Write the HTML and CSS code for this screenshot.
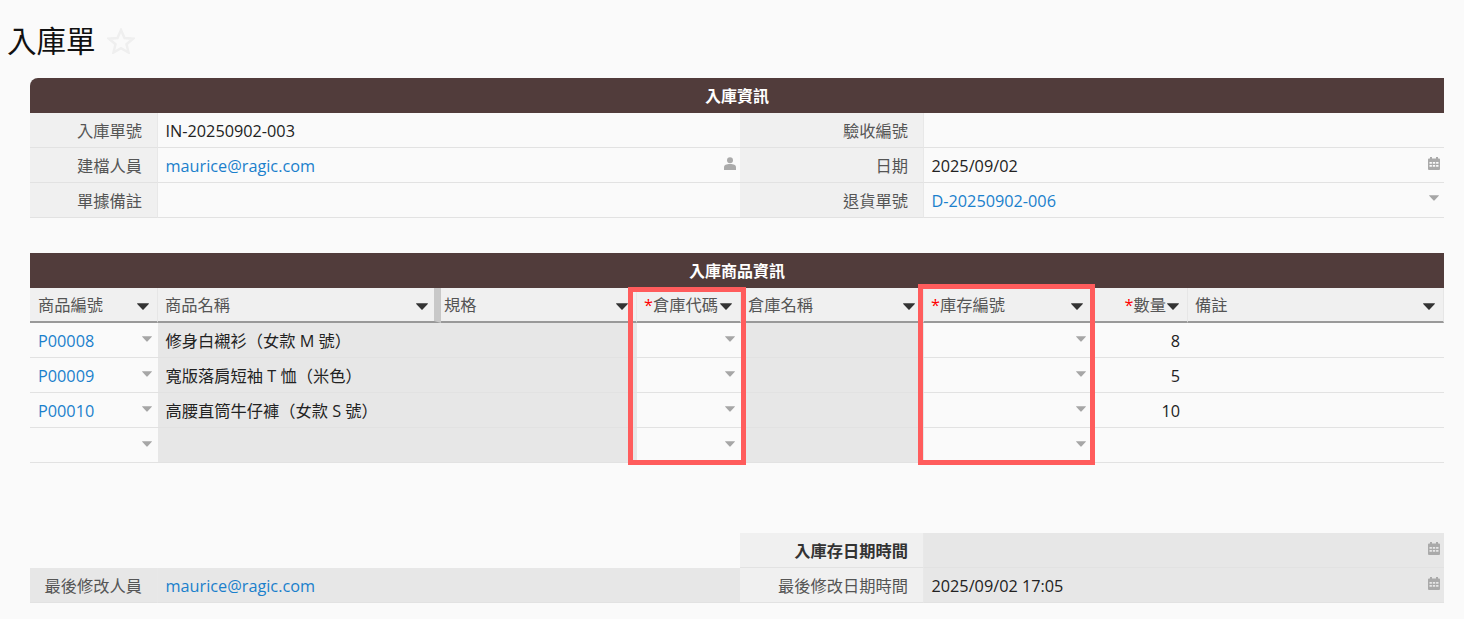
FILE: index.html
```
<!DOCTYPE html>
<html lang="zh-Hant">
<head>
<meta charset="utf-8">
<title>入庫單</title>
<link rel="stylesheet" href="styles.css">
</head>
<body>
<svg class="defs" width="0" height="0" aria-hidden="true">
  <symbol id="i-caret" viewBox="0 0 12 7"><path d="M0.5 0.2h11a0.4 0.4 0 0 1 .3 .7L6.800 6.200a1 1 0 0 1-1.600 0L.2 .9a0.4 0.4 0 0 1 .3-.7z"/></symbol>
  <symbol id="i-person" viewBox="0 0 12 13"><circle cx="6" cy="3.2" r="3"/><path d="M0 13v-2.600C0 8 2.400 7 6 7s6 1 6 3.400V13z"/></symbol>
  <symbol id="i-cal" viewBox="0 0 12 13"><path fill-rule="evenodd" d="M2 0h2v1.500h4V0h2v1.500h1a1 1 0 0 1 1 1V12a1 1 0 0 1-1 1H1a1 1 0 0 1-1-1V2.500a1 1 0 0 1 1-1h1zM1.500 5v1.800h2.400V5zm3.300 0v1.800h2.400V5zm3.300 0v1.800h2.400V5zM1.500 8v1.800h2.400V8zm3.300 0v1.800h2.400V8zm3.300 0v1.800h2.400V8z"/></symbol>
</svg>

<header class="page-head">
  <h1 class="page-title">入庫單</h1>
  <svg class="star" viewBox="0 0 28 26" width="28" height="26"><polygon points="14,2 17.500,10 26,10.700 19.500,16.300 21.500,24.500 14,20.200 6.500,24.500 8.500,16.300 2,10.700 10.500,10"/></svg>
</header>

<main class="sheet">
  <section class="section first">
    <div class="section-title rounded">入庫資訊</div>
    <div class="form-grid">
      <div class="cell label">入庫單號</div>
      <div class="cell value">IN-20250902-003</div>
      <div class="cell label">驗收編號</div>
      <div class="cell value"></div>

      <div class="cell label">建檔人員</div>
      <div class="cell value"><a class="link">maurice@ragic.com</a><svg class="icon person"><use href="#i-person"/></svg></div>
      <div class="cell label">日期</div>
      <div class="cell value"><span>2025/09/02</span><svg class="icon cal"><use href="#i-cal"/></svg></div>

      <div class="cell label">單據備註</div>
      <div class="cell value"></div>
      <div class="cell label">退貨單號</div>
      <div class="cell value"><a class="link">D-20250902-006</a><svg class="icon caret"><use href="#i-caret"/></svg></div>
    </div>
  </section>

  <section class="section second">
    <div class="section-title">入庫商品資訊</div>
    <div class="items-grid">
      <div class="cell head lead"><span>商品編號</span><svg class="icon hcaret"><use href="#i-caret"/></svg></div>
      <div class="cell head resizer"><span>商品名稱</span><svg class="icon hcaret"><use href="#i-caret"/></svg></div>
      <div class="cell head tight"><span>規格</span><svg class="icon hcaret"><use href="#i-caret"/></svg></div>
      <div class="cell head"><span><i class="req">*</i>倉庫代碼</span><svg class="icon hcaret"><use href="#i-caret"/></svg></div>
      <div class="cell head"><span>倉庫名稱</span><svg class="icon hcaret"><use href="#i-caret"/></svg></div>
      <div class="cell head"><span><i class="req">*</i>庫存編號</span><svg class="icon hcaret"><use href="#i-caret"/></svg></div>
      <div class="cell head end"><span><i class="req">*</i>數量</span><svg class="icon hcaret"><use href="#i-caret"/></svg></div>
      <div class="cell head"><span>備註</span><svg class="icon hcaret"><use href="#i-caret"/></svg></div>

      <div class="cell data lead"><a class="link">P00008</a><svg class="icon caret"><use href="#i-caret"/></svg></div>
      <div class="cell data ro">修身白襯衫（女款 M 號）</div>
      <div class="cell data ro"></div>
      <div class="cell data end"><svg class="icon caret"><use href="#i-caret"/></svg></div>
      <div class="cell data ro"></div>
      <div class="cell data end"><svg class="icon caret"><use href="#i-caret"/></svg></div>
      <div class="cell data num">8</div>
      <div class="cell data"></div>

      <div class="cell data lead"><a class="link">P00009</a><svg class="icon caret"><use href="#i-caret"/></svg></div>
      <div class="cell data ro">寬版落肩短袖 T 恤（米色）</div>
      <div class="cell data ro"></div>
      <div class="cell data end"><svg class="icon caret"><use href="#i-caret"/></svg></div>
      <div class="cell data ro"></div>
      <div class="cell data end"><svg class="icon caret"><use href="#i-caret"/></svg></div>
      <div class="cell data num">5</div>
      <div class="cell data"></div>

      <div class="cell data lead"><a class="link">P00010</a><svg class="icon caret"><use href="#i-caret"/></svg></div>
      <div class="cell data ro">高腰直筒牛仔褲（女款 S 號）</div>
      <div class="cell data ro"></div>
      <div class="cell data end"><svg class="icon caret"><use href="#i-caret"/></svg></div>
      <div class="cell data ro"></div>
      <div class="cell data end"><svg class="icon caret"><use href="#i-caret"/></svg></div>
      <div class="cell data num">10</div>
      <div class="cell data"></div>

      <div class="cell data end"><svg class="icon caret"><use href="#i-caret"/></svg></div>
      <div class="cell data ro"></div>
      <div class="cell data ro"></div>
      <div class="cell data end"><svg class="icon caret"><use href="#i-caret"/></svg></div>
      <div class="cell data ro"></div>
      <div class="cell data end"><svg class="icon caret"><use href="#i-caret"/></svg></div>
      <div class="cell data"></div>
      <div class="cell data"></div>
    </div>
    <div class="mark mark-warehouse"></div>
    <div class="mark mark-stock"></div>
  </section>

  <section class="section third">
    <div class="form-grid">
      <div class="cell blank"></div>
      <div class="cell blank"></div>
      <div class="cell label strong">入庫存日期時間</div>
      <div class="cell value ro end"><svg class="icon cal"><use href="#i-cal"/></svg></div>

      <div class="cell label dim">最後修改人員</div>
      <div class="cell value ro"><a class="link">maurice@ragic.com</a></div>
      <div class="cell label">最後修改日期時間</div>
      <div class="cell value ro"><span>2025/09/02 17:05</span><svg class="icon cal"><use href="#i-cal"/></svg></div>
    </div>
  </section>
</main>
</body>
</html>
```

FILE: styles.css
```
* { box-sizing: border-box; }

html, body { height: 100%; }

body {
  margin: 0;
  background: #fafafa;
  color: #222;
  font-family: "Open Sans", "Noto Sans CJK TC", sans-serif;
  font-size: 16.250px;
  line-height: 22px;
  overflow: hidden;
}

.defs { position: absolute; }

.page-head {
  height: 78px;
  padding: 20px 0 0 7px;
  display: flex;
  align-items: flex-start;
  gap: 11px;
}

.page-title {
  margin: 0;
  font-family: "Noto Sans CJK TC", sans-serif;
  font-size: 29.500px;
  line-height: 38px;
  font-weight: 400;
  color: #111;
}

.star {
  margin-top: 8px;
  fill: none;
  stroke: #efefef;
  stroke-width: 2.500;
}

.sheet { padding: 0 20px 0 30px; }

.section { position: relative; }
.second { margin-top: 35px; }
.third { margin-top: 70px; }

.section-title {
  height: 35px;
  background: #513c3b;
  color: #fff;
  font-size: 16px;
  font-weight: 700;
  font-family: "Noto Sans CJK TC", sans-serif;
  text-align: center;
  line-height: 35px;
}

.rounded { border-top-left-radius: 8px; }

.form-grid {
  display: grid;
  grid-template-columns: 128px 582px 184px 520px;
  grid-auto-rows: 35px;
}

.items-grid {
  display: grid;
  grid-template-columns: 128px 283px 196px 104px 183px 168px 96px 256px;
  grid-auto-rows: 35px;
}

.cell {
  display: flex;
  align-items: center;
  justify-content: space-between;
  min-width: 0;
  padding-top: 2px;
  border-bottom: 1px solid #e2e2e2;
  white-space: nowrap;
}

.label {
  justify-content: flex-end;
  padding-right: 15px;
  background: #f0f0f0;
  border-right: 1px solid #e8e8e8;
  color: #555;
}

.label.strong { color: #333; font-weight: 700; }
.label.dim { background: #e7e7e7; }

.value { padding: 2px 4px 0 7.500px; }

.ro { background: #e7e7e7; }

.blank { border-bottom: 0; }

.head {
  padding: 1px 8px 0 7px;
  background: #f0f0f0;
  border-bottom: 2px solid #999;
  border-right: 1px solid #e6e6e6;
  color: #555;
}

.head.lead { padding-left: 8px; }
.head.tight { padding-left: 3px; }
.head.resizer { padding-right: 6px; border-right: 7px solid #c8c8c8; }
.head.end { justify-content: flex-end; gap: 1px; }

.data { padding: 2px 6px 0 7.500px; }
.data.lead { padding-left: 8px; }
.data.end { justify-content: flex-end; }
.data.num { justify-content: flex-end; padding-right: 8px; }

.value.end { justify-content: flex-end; }

.link { color: #1a80cc; }

.req { color: #f00; font-style: normal; }

.icon { flex: none; display: block; }

.caret {
  width: 10px;
  height: 6px;
  margin-bottom: 4px;
  fill: #a6a6a6;
}

.value .caret { margin-right: 1px; margin-bottom: 6px; }

.hcaret {
  width: 12px;
  height: 7px;
  margin-top: 3px;
  fill: #333;
}

.person {
  width: 12px;
  height: 13px;
  margin-bottom: 5px;
  fill: #aaa;
}

.cal {
  width: 12px;
  height: 13px;
  margin-bottom: 5px;
  fill: #aaa;
}

.mark {
  position: absolute;
  border: 5px solid #ff5c5c;
  pointer-events: none;
}

.mark-warehouse { left: 598px; top: 34px; width: 118px; height: 178px; }
.mark-stock { left: 888px; top: 31px; width: 177px; height: 181px; }
```
